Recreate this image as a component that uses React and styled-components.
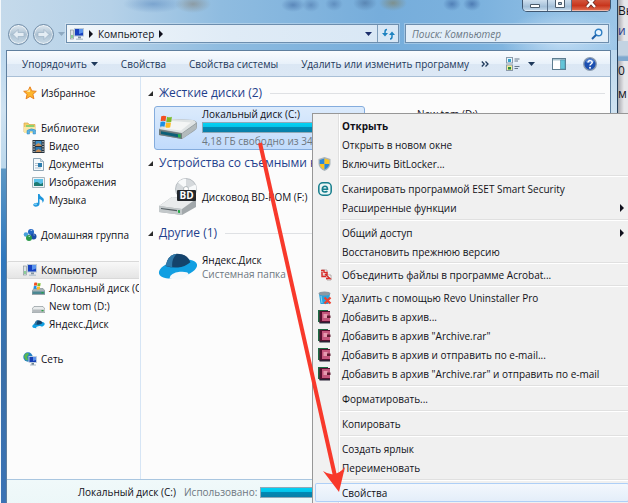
import React from 'react'
import styled, {createGlobalStyle, css} from 'styled-components'

const GlobalStyle = createGlobalStyle`
  * {
    box-sizing: border-box;
  }

  body {
    margin: 0;
    overflow: hidden;
    background: #f4f8fb;
    color: #101018;
    font: 10px/18px "Open Sans", "Noto Sans", sans-serif;
  }

  button, input {
    margin: 0;
    padding: 0;
    border: 0;
    background: none;
    color: inherit;
    font: inherit;
    text-align: left;
    white-space: nowrap;
  }

  a {
    color: inherit;
    text-decoration: none;
  }

  svg {
    display: block;
    flex: none;
  }
`

const Desktop = styled.div`
  position: relative;
  display: flex;
  height: 100vh;
  padding-left: 1px;
  overflow: hidden;
`

/* the window is taller than the screen, its last rows are cut off */
const Window = styled.div`
  flex: 1;
  min-width: 0;
  min-height: calc(100vh + 30px);
  display: flex;
  flex-direction: column;
  padding: 0 6px 0 5px;
  border-right: 1px solid #27415c;
  background:
    radial-gradient(ellipse 18px 9px at 192px 4px, rgba(125, 110, 90, .45), transparent),
    radial-gradient(ellipse 14px 8px at 392px 3px, rgba(130, 125, 90, .6), transparent),
    radial-gradient(ellipse 12px 8px at 364px 3px, rgba(60, 95, 140, .5), transparent),
    radial-gradient(ellipse 30px 9px at 152px 4px, rgba(70, 120, 180, .45), transparent),
    radial-gradient(ellipse 12px 7px at 292px 5px, rgba(50, 90, 150, .5), transparent),
    radial-gradient(ellipse 9px 7px at 310px 5px, rgba(60, 100, 155, .45), transparent),
    radial-gradient(ellipse 9px 7px at 333px 4px, rgba(60, 100, 155, .45), transparent),
    radial-gradient(ellipse 9px 7px at 451px 4px, rgba(40, 80, 145, .5), transparent),
    radial-gradient(ellipse 9px 7px at 471px 4px, rgba(40, 80, 145, .55), transparent),
    radial-gradient(ellipse 60px 30px at 560px 40px, rgba(225, 240, 255, .6), transparent),
    linear-gradient(90deg, #c5daeb 0, #b5d1e8 110px, #8fbce0 220px, #76addb 380px, #7cb2de 480px, #9cc6e8 100%) 0 0 / 100% 50px no-repeat,
    linear-gradient(#bcd8ee 50px, #cfe2f1 110px, #bcd8ec 168px, #5c97c4 169px, #2f77bd 260px, #3a6fa8 370px, #3b74b8 100%);
`

const TitleBar = styled.header`
  height: 22px;
  display: flex;
  justify-content: flex-end;
`

const Caption = styled.div`
  display: flex;
  height: 12px;
  border: 1px solid #3f5670;
  border-top: 0;
  border-radius: 0 0 5px 5px;
  overflow: hidden;
`

const CaptionButton = styled.button`
  width: ${({$close}) => ($close ? 39 : 24)}px;
  display: flex;
  justify-content: center;
  background: ${({$close}) => ($close
    ? 'linear-gradient(#d2573f, #c8351c 50%, #e2765a)'
    : 'linear-gradient(#cfe0ef, #a3bfd8 60%, #c7dcee)')};
  box-shadow: inset 0 -1px rgba(255, 255, 255, .5);

  & + & {
    border-left: 1px solid #5b738d;
  }
`

const NavBar = styled.nav`
  height: 28px;
  display: flex;
  align-items: flex-start;
  padding: 2px 2px 0;
`

const History = styled.div`
  display: flex;
  gap: 4px;
  align-items: center;
  height: 20px;
  margin-right: 1px;
`

const HistoryButton = styled.button`
  width: 21px;
  height: 21px;
  display: flex;
  align-items: center;
  justify-content: center;
  border: 1px solid #6f8ba6;
  border-radius: 50%;
  background: linear-gradient(#dde7ef, #adc2d3 50%, #c9dae7);
  box-shadow: inset 0 0 0 1px rgba(255, 255, 255, .6);
`

const fieldBox = css`
  display: flex;
  align-items: center;
  height: 19px;
  border: 1px solid #6d8eae;
  box-shadow: 0 0 0 1px rgba(255, 255, 255, .3);
`

const Address = styled.div`
  ${fieldBox}
  flex: 1;
  gap: 5px;
  padding-left: 3px;
  background: linear-gradient(90deg, #f1f6fa, #dfebf6 50%, #d8e7f5);
`

const Refresh = styled.button`
  width: 21px;
  height: 17px;
  display: flex;
  align-items: center;
  justify-content: center;
  border-left: 1px solid #7f9dba;
`

const Crumb = styled.button`
  flex: ${({$last}) => ($last ? 1 : 'none')};
`

const Search = styled.label`
  ${fieldBox}
  width: 204px;
  margin-left: 6px;
  padding: 0 5px 0 6px;
  background: #e3eef8;
`

const SearchInput = styled.input`
  flex: 1;
  min-width: 0;
  outline: 0;
  font-style: italic;

  &::placeholder {
    color: #6a7784;
    opacity: 1;
  }
`

const Client = styled.div`
  flex: 1;
  display: flex;
  flex-direction: column;
  border: 1px solid #5f7f9e;
  border-bottom: 0;
  background: #fcfcfc;
`

const Toolbar = styled.div`
  height: 26px;
  display: flex;
  align-items: center;
  padding: 0 13px 0 15px;
  border-bottom: 1px solid #a9bfd6;
  background: linear-gradient(#fafcfe, #e8f1fa 50%, #dbe7f4 52%, #dce8f5);
  color: #1e395b;
`

const Command = styled.button`
  display: flex;
  align-items: center;
  gap: 4px;
  margin-right: 23px;

  &:last-of-type {
    margin-right: 12px;
  }
`

const ToolIcons = styled.div`
  flex: 1;
  display: flex;
  align-items: center;
  justify-content: flex-end;
  gap: 17px;
`

const ViewButton = styled.button`
  display: flex;
  align-items: center;
  gap: 8px;
`

const Body = styled.div`
  flex: 1;
  display: flex;
`

const Sidebar = styled.aside`
  width: 134px;
  flex: none;
  display: flex;
  flex-direction: column;
  gap: 17px;
  padding: 7px 1px 0 0;
  border-right: 1px solid #d6e5f5;
`

const TreeItem = styled.a`
  display: flex;
  align-items: center;
  gap: 4px;
  height: 18px;
  padding-left: ${({$child}) => ($child ? 25 : 16)}px;
  overflow: hidden;
  white-space: nowrap;
  ${({$active}) => $active && css`
    border: 1px solid #d9d9d9;
    border-width: 1px 0;
    border-radius: 2px 0 0 2px;
    background: linear-gradient(#f8f8f8, #e5e5e5);
  `}
`

const Main = styled.main`
  flex: 1;
  min-width: 0;
  padding: 7px 5px 0 7px;
`

const GroupTitle = styled.h2`
  display: flex;
  align-items: center;
  gap: 6px;
  height: 18px;
  margin: 0;
  color: #1f3f8c;
  font-size: 12px;
  font-weight: 400;
  white-space: nowrap;

  &::after {
    content: '';
    flex: 1;
    height: 1px;
    margin-left: 2px;
    background: #dfe1e4;
  }
`

const Tiles = styled.div`
  display: grid;
  grid-template-columns: repeat(auto-fill, 211px);
  gap: 4px;
  padding: 4px 0 4px 6px;
`

const Tile = styled.button`
  display: flex;
  align-items: center;
  gap: 4px;
  height: 44px;
  padding: 0 7px 2px 3px;
  border: 1px solid ${({$active}) => ($active ? '#84acdd' : 'transparent')};
  border-radius: 3px;
  background: ${({$active}) => ($active ? 'linear-gradient(#dcebfc, #c1dbfc)' : 'none')};
`

const TileText = styled.span`
  flex: 1;
  display: flex;
  flex-direction: column;
  line-height: 14px;
`

const Muted = styled.span`
  color: #6d7780;
`

const Bar = styled.span`
  display: block;
  width: ${({$wide}) => ($wide ? '100%' : '90px')};
  height: 11px;
  margin: 1px 0;
  border: 1px solid #8fa9b8;
  background: #e6e6e6;

  span {
    display: block;
    height: 9px;
    background: linear-gradient(#00d3f5, #06c2e8 45%, #0089b4 50%, #0a7ea8);
  }
`

const Details = styled.footer`
  height: 54px;
  display: grid;
  grid-template-columns: 102px 72px 90px;
  align-content: start;
  align-items: center;
  column-gap: 4px;
  padding: 3px 0 0 71px;
  border-top: 1px solid #a9c6e0;
  background: linear-gradient(#f0f9fa, #e8f5f6);
  white-space: nowrap;
`

const Behind = styled.div`
  width: 10px;
  flex: none;
  overflow: hidden;
  padding-top: 1px;
  background: linear-gradient(90deg, #a8a8ae, #e6e7ea 6px);
  font-size: 12px;
  white-space: nowrap;
`

const BehindLine = styled.div`
  height: ${({$tall}) => ($tall ? 26 : 20)}px;
  line-height: ${({$tall}) => ($tall ? 26 : 20)}px;
  color: ${({$link}) => ($link ? '#2a3a8c' : '#15151c')};
  background: ${({$band}) => ($band ? 'linear-gradient(#c3d3e2 70%, #7fa9cf 80%)' : 'none')};
`

const Menu = styled.div`
  position: absolute;
  top: 113px;
  left: 312px;
  right: -4px;
  padding: 2px;
  border: 1px solid #979797;
  background: linear-gradient(90deg, #f1f1f1 25px, #e0e0e0 25px, #e0e0e0 26px, #fff 26px, #fff 27px, #f0f0f0 27px);
`

const MenuItem = styled.button`
  display: flex;
  align-items: center;
  width: 100%;
  height: 19px;
  padding: 0 5px 0 3px;
  border-radius: 2px;
  font-weight: ${({$bold}) => ($bold ? 700 : 400)};
  ${({$active}) => $active && css`
    background: linear-gradient(#f4f8fd, #e3edf9);
    box-shadow: inset 0 0 0 1px #aecff7;
  `}
`

const MenuIcon = styled.span`
  width: 24px;
  flex: none;
`

const MenuLabel = styled.span`
  flex: 1;
`

const Divider = styled.hr`
  height: 2px;
  margin: ${({$tight}) => ($tight ? 1 : 2)}px 0 ${({$tight}) => ($tight ? 1 : 2)}px 25px;
  border: 0;
  border-top: 1px solid #e0e0e0;
  background: #fff;
`

const Arrow = styled.svg`
  position: absolute;
  top: 140px;
  left: 255px;
`

/* icons */

const Caret = ({color = '#1e395b'}) => (
  <svg width="7" height="4" viewBox="0 0 7 4"><path d="M0 0h7L3.500 4z" fill={color}/></svg>
)

const Chevron = () => (
  <svg width="4" height="8" viewBox="0 0 4 8"><path d="M0 0l4 4-4 4z" fill="#10101c"/></svg>
)

const Twisty = () => (
  <svg width="5" height="5" viewBox="0 0 5 5"><path d="M5 0v5H0z" fill="#2b2b2b"/></svg>
)

const NavArrow = ({flip}) => (
  <svg width="13" height="11" viewBox="0 0 13 11">
    <path
      d="M6 .5L1 5.500l5 5V7.500h6v-4H6z"
      transform={flip ? 'rotate(180 6.500 5.500)' : undefined}
      fill="#e4edf4" stroke="#9db3c6" strokeWidth=".7"
    />
  </svg>
)

const ComputerIcon = () => (
  <svg width="14" height="14" viewBox="0 0 14 14">
    <rect x=".5" y="3" width="3" height="9" fill="#dfe4e6" stroke="#7e8b92" strokeWidth=".6"/>
    <path d="M1.500 8h1v3h-1z" fill="#39b54a"/>
    <rect x="4.500" y="1.500" width="9" height="7.500" fill="#1640c0" stroke="#b9c9d8"/>
    <path d="M9 2h4v3.500L9 7z" fill="#5a94ee"/>
    <path d="M8 9.500h3v2H8z" fill="#8394a5"/>
    <path d="M6 11.500h7V13H6z" fill="#bcc8d2"/>
  </svg>
)

const RefreshIcon = () => (
  <svg width="13" height="12" viewBox="0 0 13 12" fill="none" stroke="#1d82c0" strokeWidth="1.500">
    <path d="M5 1.500c-1.500 0-2 .8-2 2.500v2.500M8 11c1.500 0 2-.8 2-2.500V6"/>
    <path d="M0 5h6L3 8.500zM7 7h6l-3-3.500z" fill="#1d82c0" stroke="none"/>
  </svg>
)

const SearchIcon = () => (
  <svg width="12" height="12" viewBox="0 0 12 12" fill="none">
    <circle cx="7.500" cy="4.500" r="3.300" stroke="#2f7fc4" strokeWidth="1.400" fill="#e8f4ff"/>
    <path d="M5 7l-4 4" stroke="#1f5fa8" strokeWidth="2"/>
  </svg>
)

const ViewIcon = () => (
  <svg width="14" height="14" viewBox="0 0 14 14">
    <rect x=".5" y=".5" width="6" height="5.500" fill="#e8f5ff" stroke="#8b9aa8"/>
    <path d="M2 2h3v3H2z" fill="#33a3cc"/>
    <rect x=".5" y="8" width="6" height="5.500" fill="#f2ee9a" stroke="#8b9aa8"/>
    <path d="M2 10h3v2.500H2z" fill="#2a8a3e"/>
    <path d="M8.500 2h5M8.500 4h3.500M8.500 9.500h5M8.500 11.500h3.500" stroke="#66788a"/>
  </svg>
)

const PreviewIcon = () => (
  <svg width="14" height="12" viewBox="0 0 14 12">
    <rect x=".5" y=".5" width="13" height="11" fill="#fff" stroke="#5d7c8f"/>
    <path d="M1 1h12v1.500H1z" fill="#a8c3cf"/>
    <path d="M8.500 2h4.500v9H8.500z" fill="#62c4d8" stroke="#4e8fa6" strokeWidth=".6"/>
  </svg>
)

const HelpIcon = () => (
  <svg width="14" height="14" viewBox="0 0 14 14">
    <circle cx="7" cy="7" r="6.300" fill="#1c4fb0" stroke="#8d9db0" strokeWidth="1.300"/>
    <path d="M2.500 5a4.800 4.800 0 0 1 9 0Q7 7 2.500 5z" fill="#7aa5e6" opacity=".6"/>
    <path d="M5 5.500c0-2.600 4.200-2.400 4.200 0C9.200 7 7 7 7 8.600" fill="none" stroke="#fff" strokeWidth="1.500"/>
    <circle cx="7" cy="10.700" r="1" fill="#fff"/>
  </svg>
)

const StarIcon = () => (
  <svg width="14" height="14" viewBox="0 0 14 14">
    <path d="M7 .8l1.800 4.100 4.500.4-3.400 3 1 4.500L7 10.400l-3.900 2.400 1-4.500-3.400-3 4.500-.4z" fill="#fdb62c" stroke="#e9801e"/>
    <path d="M7 3v3L3.500 6z" fill="#ffe99a"/>
  </svg>
)

const LibraryIcon = () => (
  <svg width="14" height="14" viewBox="0 0 14 14">
    <path d="M1 2h4l1 1.500h6V11H1z" fill="#f5cf6d" stroke="#d9a648" strokeWidth=".7"/>
    <path d="M3 4h8v4H3z" fill="#8ed06f"/>
    <path d="M1 6h11v6H1z" fill="#fae7a4"/>
    <path d="M4 13V9.500Q8 6.500 12.500 9v4h-2.500v-3H6.500v3z" fill="#5cb4e5" stroke="#2b87c0" strokeWidth=".5"/>
  </svg>
)

const VideoIcon = () => (
  <svg width="13" height="13" viewBox="0 0 13 13">
    <path d="M.5 0h12v13H.5z" fill="#26323c"/>
    <path d="M3.500 1h6v5h-6z" fill="#3c8fc8"/>
    <path d="M3.500 7h6v5h-6z" fill="#2c76b0"/>
    <path d="M3.500 5l3-2 3 2v1h-6zM3.500 11l3-2 3 2v1h-6z" fill="#c58b55"/>
    <path d="M2 1v11M11 1v11" stroke="#d9e3ea" strokeWidth="1.200" strokeDasharray="1.300 1.200"/>
  </svg>
)

const DocumentIcon = () => (
  <svg width="13" height="13" viewBox="0 0 13 13">
    <path d="M1.500.5h7l3 3v9h-10z" fill="#f5f9fc" stroke="#8ea5b5"/>
    <path d="M8.500.5v3h3" fill="#c9dbe8" stroke="#8ea5b5" strokeWidth=".7"/>
    <path d="M3 5.500h4M3 7.500h3M3 10h6" stroke="#9fb2c0" strokeWidth=".8"/>
    <path d="M6 5h4v4H6z" fill="#2d7cae"/>
  </svg>
)

const PictureIcon = () => (
  <svg width="13" height="13" viewBox="0 0 13 13">
    <path d="M.5 1.500h12v10H.5z" fill="#eef3f5" stroke="#a7b4bc"/>
    <path d="M2 3h9v7H2z" fill="#5cc2ea"/>
    <path d="M2 7q3-2 5 0t4-.5V10H2z" fill="#1e7a72"/>
  </svg>
)

const MusicIcon = () => (
  <svg width="13" height="13" viewBox="0 0 13 13">
    <path d="M6 0h1.500Q8 2.500 11 4q2 2-.5 5Q11 6 7.500 5v5Q7 12.700 3.500 12.800 1 12.500 1.200 10.500 2 8.500 6 8.800z" fill="#1e96dc"/>
    <ellipse cx="3.600" cy="10.300" rx="1.600" ry="1" fill="#79ccf4"/>
  </svg>
)

const HomegroupIcon = () => (
  <svg width="14" height="14" viewBox="0 0 14 14">
    <circle cx="8" cy="4" r="3" fill="#2467c4"/>
    <circle cx="3" cy="6.500" r="2.300" fill="#4aa0dc"/>
    <circle cx="10.500" cy="8.500" r="3" fill="#1c4ea6"/>
    <circle cx="6" cy="10" r="3" fill="#2c9a4b"/>
    <path d="M7 2.500l1.500-.7 1 1zM5 8.800l1.500-.7.8 1zM10 7l1.200-.5.8 1z" fill="#e2f2ff"/>
  </svg>
)

const Flag = ({x = 0, y = 0, s = 1}) => (
  <g transform={`translate(${x} ${y}) scale(${s})`}>
    <path d="M1 1Q3 0 5 1L4.400 5Q2.500 4 .5 5z" fill="#f25022"/>
    <path d="M5.600 1.300Q7.500 2.200 9.500 1.300L9 5.300Q7 6.200 5 5.300z" fill="#7cbb2a"/>
    <path d="M.4 5.600Q2.300 4.700 4.200 5.600L3.600 9.400Q1.800 8.500 0 9.400z" fill="#1c8fe3"/>
    <path d="M4.900 5.900Q6.900 6.800 8.800 5.900L8.200 9.800Q6.300 10.600 4.300 9.800z" fill="#ffbb22"/>
  </g>
)

const DiskIcon = ({system}) => (
  <svg width="13" height="13" viewBox="0 0 13 13">
    <path d="M2 6.500h9l2 2.500v3.500H0V9z" fill={system ? '#a5b1b5' : '#e8ebec'} stroke="#7c878c" strokeWidth=".6"/>
    <path d="M.5 9.500h12v2.500H.5z" fill={system ? '#4b8792' : '#b5babd'}/>
    <path d="M9.500 10h2v1.300h-2z" fill="#27a243"/>
    {system && <Flag x={1.500} s={0.750}/>}
  </svg>
)

const YandexIcon = ({width = 13, height = 13}) => (
  <svg width={width} height={height} viewBox="0 0 42 30">
    <ellipse cx="21" cy="17" rx="20.500" ry="9" transform="rotate(-14 21 17)" fill="#119fe2"/>
    <path d="M8 14Q10 2 20 1q11 0 14 9-6 5-13 5.500T8 14z" fill="#14436c"/>
    <path d="M8 14Q10 2 20 1q-6 5-5 14.300z" fill="#2f78a8"/>
    <path d="M12 27q1-6 11-7 8-.5 9 2-2 6-12 6.500z" fill="#f4f8fb"/>
  </svg>
)

const NetworkIcon = () => (
  <svg width="14" height="14" viewBox="0 0 14 14">
    <circle cx="5" cy="5" r="4.700" fill="#2680c4"/>
    <path d="M2 2q3-2 4 0L4 5l1 3-2 .5L1 5z" fill="#59b851"/>
    <rect x="6" y="4.500" width="7.500" height="6" fill="#163fb6" stroke="#c3d2df" strokeWidth=".9"/>
    <path d="M10 5h3v3l-3 1z" fill="#5c91e8"/>
    <path d="M8.500 11h2.500v2H8.500z" fill="#6d8193"/>
    <path d="M7 12.500h6v1H7z" fill="#aab8c4"/>
  </svg>
)

const BigDiskIcon = () => (
  <svg width="40" height="26" viewBox="0 0 40 26">
    <path d="M1 15L13 5l22 1q4 1 4 4v3q0 2-3 4l-12 8-23-4z" fill="#8d9598"/>
    <path d="M1 15L13 5l22 1q3 1 3 3L24 19z" fill="#dfe3e4"/>
    <path d="M6 14.500L14 7l19 1.500-10 8z" fill="#f4f5f5"/>
    <path d="M1 15.500l23 4V25L1 21z" fill="#6d7b7d"/>
    <path d="M3 17.200l17 3v3L3 20z" fill="#0b5f78"/>
    <path d="M20 20l2.500.4v3.400L20 23z" fill="#22b14c"/>
    <path d="M24 19.500L38.500 9.500v5L24 25z" fill="#b3babc"/>
    <Flag x={2} y={1} s={1.250}/>
  </svg>
)

const BdRomIcon = () => (
  <svg width="40" height="38" viewBox="0 0 40 38">
    <circle cx="28" cy="11" r="10.500" fill="#d5d9dc" stroke="#a4abb0" strokeWidth=".7"/>
    <path d="M28 11L20 4.500A10.500 10.500 0 0 1 28 .8zM28 11l9.500-4.500A10.500 10.500 0 0 1 38 14z" fill="#f7f9fa"/>
    <circle cx="28" cy="11" r="2.500" fill="#fff" stroke="#9aa3a9" strokeWidth=".7"/>
    <path d="M1 28l13-9 24 2v8l-14 8-23-3z" fill="#a2a8ab"/>
    <path d="M1 28l13-9 24 2-14 10z" fill="#e9ebec"/>
    <path d="M1 28l23 3v6L1 34z" fill="#c3c8ca"/>
    <path d="M3 30.500l16 2.200" stroke="#555e62" strokeWidth="1.200"/>
    <path d="M20 32l2 .3V35l-2-.3z" fill="#22a845"/>
    <rect x="19" y="12" width="19" height="11" rx="1" fill="#23272b"/>
    <text x="28.500" y="21" fill="#fff" fontSize="10" fontWeight="700" textAnchor="middle">BD</text>
  </svg>
)

const ShieldIcon = () => (
  <svg width="13" height="14" viewBox="0 0 13 14">
    <path d="M6.500 0L12.500 2v5q-.5 4.500-6 7-5.500-2.500-6-7V2z" fill="#aab4ba"/>
    <path d="M6.500 1.500V7H1.700V3z" fill="#2a87d8"/>
    <path d="M6.500 1.500V7h4.800V3z" fill="#fbc31f"/>
    <path d="M6.500 12.500V7H1.700q.6 3.500 4.800 5.500z" fill="#fbc31f"/>
    <path d="M6.500 12.500V7h4.800q-.6 3.500-4.800 5.500z" fill="#2a87d8"/>
  </svg>
)

const EsetIcon = () => (
  <svg width="14" height="14" viewBox="0 0 14 14">
    <rect x=".8" y=".8" width="12.400" height="12.400" rx="4" fill="#eaf6f6" stroke="#147d8c" strokeWidth="1.500"/>
    <path d="M4.300 7.200h5.200Q9.500 4.200 7 4.200T4.300 7.200t2.900 2.700q1.400 0 2.200-.8" fill="none" stroke="#147d8c" strokeWidth="1.600"/>
  </svg>
)

const AcrobatIcon = () => (
  <svg width="14" height="12" viewBox="0 0 14 12">
    <path d="M4 1h5v5H4zM9 6h4v5H9z" fill="#fff" stroke="#9a8c8c" strokeWidth=".7"/>
    <path d="M3 1.500h3v2h3V6M4 3v4.500h4M7 5l5 4.500H8" fill="none" stroke="#d92c28" strokeWidth="1.400"/>
  </svg>
)

const RevoIcon = () => (
  <svg width="14" height="14" viewBox="0 0 14 14">
    <path d="M1 3h11l-1.500 10h-8z" fill="#2aa3dd"/>
    <ellipse cx="6.500" cy="2.500" rx="6" ry="2" fill="#8b99a3"/>
    <path d="M3 5l1 7" stroke="#8bd3f5"/>
    <path d="M6.500 6.500l6 6m0-6l-6 6" stroke="#ee4130" strokeWidth="2.200"/>
  </svg>
)

const RarIcon = () => (
  <svg width="14" height="15" viewBox="0 0 14 15">
    <path d="M0 1h10v12H0z" fill="#1d6b43"/>
    <path d="M1.500 2H12v12H1.500z" fill="#571030"/>
    <path d="M4 3h8v9H4z" fill="#c4567c"/>
    <path d="M5.500 5h4v4h-4z" fill="#e79ab0"/>
    <path d="M9 6.500h3.500v2.500H9z" fill="#5d1a30"/>
    <path d="M1.500 13H12v1.500H1.500z" fill="#2b2336"/>
  </svg>
)

const tree = [
  [{text: 'Избранное', icon: <StarIcon/>}],
  [
    {text: 'Библиотеки', icon: <LibraryIcon/>},
    {text: 'Видео', icon: <VideoIcon/>, child: true},
    {text: 'Документы', icon: <DocumentIcon/>, child: true},
    {text: 'Изображения', icon: <PictureIcon/>, child: true},
    {text: 'Музыка', icon: <MusicIcon/>, child: true},
  ],
  [{text: 'Домашняя группа', icon: <HomegroupIcon/>}],
  [
    {text: 'Компьютер', icon: <ComputerIcon/>, active: true},
    {text: 'Локальный диск (C:)', icon: <DiskIcon system/>, child: true},
    {text: 'New tom (D:)', icon: <DiskIcon/>, child: true},
    {text: 'Яндекс.Диск', icon: <YandexIcon/>, child: true},
  ],
  [{text: 'Сеть', icon: <NetworkIcon/>}],
]

const menu = [
  {text: 'Открыть', bold: true},
  {text: 'Открыть в новом окне'},
  {text: 'Включить BitLocker...', icon: <ShieldIcon/>},
  {divider: true},
  {text: 'Сканировать программой ESET Smart Security', icon: <EsetIcon/>},
  {text: 'Расширенные функции', more: true},
  {divider: true},
  {text: 'Общий доступ', more: true},
  {text: 'Восстановить прежнюю версию'},
  {divider: true, tight: true},
  {text: 'Объединить файлы в программе Acrobat...', icon: <AcrobatIcon/>},
  {divider: true, tight: true},
  {text: 'Удалить с помощью Revo Uninstaller Pro', icon: <RevoIcon/>},
  {text: 'Добавить в архив...', icon: <RarIcon/>},
  {text: 'Добавить в архив "Archive.rar"', icon: <RarIcon/>},
  {text: 'Добавить в архив и отправить по e-mail...', icon: <RarIcon/>},
  {text: 'Добавить в архив "Archive.rar" и отправить по e-mail', icon: <RarIcon/>},
  {divider: true},
  {text: 'Форматировать...'},
  {divider: true},
  {text: 'Копировать'},
  {divider: true},
  {text: 'Создать ярлык'},
  {text: 'Переименовать'},
  {divider: true},
  {text: 'Свойства', active: true},
]

const UsageBar = ({used, wide}) => (
  <Bar $wide={wide}><span style={{width: `${used}%`}}/></Bar>
)

const Group = ({title, children}) => (
  <section>
    <GroupTitle><Twisty/>{title}</GroupTitle>
    <Tiles>{children}</Tiles>
  </section>
)

const ContextMenu = () => (
  <Menu role="menu">
    {menu.map((item, i) => item.divider
      ? <Divider key={i} $tight={item.tight}/>
      : (
        <MenuItem key={i} role="menuitem" $bold={item.bold} $active={item.active}>
          <MenuIcon>{item.icon}</MenuIcon>
          <MenuLabel>{item.text}</MenuLabel>
          {item.more && <Chevron/>}
        </MenuItem>
      ))}
  </Menu>
)

const App = () => (
  <>
    <GlobalStyle/>
    <Desktop>
      <Window>
        <TitleBar>
          <Caption>
            <CaptionButton aria-label="Свернуть">
              <svg width="12" height="10"><path d="M1.500 4.500h9v3h-9z" fill="#fff" stroke="#4b5b6b"/></svg>
            </CaptionButton>
            <CaptionButton aria-label="Развернуть">
              <svg width="12" height="10">
                <path d="M1.500-2h9v9.500h-9z" fill="#fff" stroke="#4b5b6b"/>
                <path d="M4.500 2.500h3v2h-3z" fill="#a9c0d6" stroke="#4b5b6b"/>
              </svg>
            </CaptionButton>
            <CaptionButton $close aria-label="Закрыть">
              <svg width="12" height="10">
                <path d="M2-2l8 9M10-2L2 7" stroke="#6b2a22" strokeWidth="4"/>
                <path d="M2-2l8 9M10-2L2 7" stroke="#fff" strokeWidth="2.400"/>
              </svg>
            </CaptionButton>
          </Caption>
        </TitleBar>

        <NavBar>
          <History>
            <HistoryButton aria-label="Назад"><NavArrow/></HistoryButton>
            <HistoryButton aria-label="Вперед"><NavArrow flip/></HistoryButton>
            <Caret color="#8ea9c1"/>
          </History>
          <Address>
            <ComputerIcon/>
            <Chevron/>
            <Crumb>Компьютер</Crumb>
            <Crumb $last aria-label="Папки"><Chevron/></Crumb>
            <Caret color="#1b2e6b"/>
            <Refresh aria-label="Обновить"><RefreshIcon/></Refresh>
          </Address>
          <Search>
            <SearchInput placeholder="Поиск: Компьютер" aria-label="Поиск: Компьютер"/>
            <SearchIcon/>
          </Search>
        </NavBar>

        <Client>
          <Toolbar>
            <Command>Упорядочить <Caret/></Command>
            <Command>Свойства</Command>
            <Command>Свойства системы</Command>
            <Command>Удалить или изменить программу</Command>
            <ToolIcons>
              <svg width="8" height="6" viewBox="0 0 8 6" fill="none" stroke="#1e395b" strokeWidth="1.300">
                <path d="M.8.500L3.200 3 .8 5.500M4.500.5L7 3 4.500 5.500"/>
              </svg>
              <ViewButton aria-label="Изменить представление"><ViewIcon/><Caret/></ViewButton>
              <PreviewIcon/>
              <HelpIcon/>
            </ToolIcons>
          </Toolbar>

          <Body>
            <Sidebar>
              {tree.map((items, i) => (
                <div key={i}>
                  {items.map(({text, icon, child, active}) => (
                    <TreeItem key={text} href="#" $child={child} $active={active}>
                      {icon}<span>{text}</span>
                    </TreeItem>
                  ))}
                </div>
              ))}
            </Sidebar>

            <Main>
              <Group title="Жесткие диски (2)">
                <Tile $active>
                  <BigDiskIcon/>
                  <TileText>
                    Локальный диск (C:)
                    <UsageBar used={88} wide/>
                    <Muted>4,18 ГБ свободно из 34,3 ГБ</Muted>
                  </TileText>
                </Tile>
                <Tile>
                  <BigDiskIcon/>
                  <TileText>
                    New tom (D:)
                    <UsageBar used={60} wide/>
                    <Muted>80,2 ГБ свободно из 198 ГБ</Muted>
                  </TileText>
                </Tile>
              </Group>
              <Group title="Устройства со съемными носителями (1)">
                <Tile>
                  <BdRomIcon/>
                  <TileText>Дисковод BD-ROM (F:)</TileText>
                </Tile>
              </Group>
              <Group title="Другие (1)">
                <Tile>
                  <YandexIcon width={40} height={30}/>
                  <TileText>
                    Яндекс.Диск
                    <Muted>Системная папка</Muted>
                  </TileText>
                </Tile>
              </Group>
            </Main>
          </Body>

          <Details>
            <span>Локальный диск (C:)</span>
            <Muted>Использовано:</Muted>
            <UsageBar used={88}/>
            <Muted>Локальный диск</Muted>
            <Muted>Свободно:</Muted>
            <span>4,18 ГБ</span>
          </Details>
        </Client>
      </Window>

      <Behind aria-hidden="true">
        <BehindLine>Вы</BehindLine>
        <BehindLine $link>и</BehindLine>
        <BehindLine $band/>
        <BehindLine>0</BehindLine>
        <BehindLine $tall>м</BehindLine>
      </Behind>

      <ContextMenu/>

      <Arrow width="100" height="360" viewBox="0 0 100 360">
        <path d="M5 3l75 333" stroke="#f8392b" strokeWidth="4"/>
        <path d="M84 352L68 331q6 4 11 3 6-1 11-7z" fill="#f8392b"/>
      </Arrow>
    </Desktop>
  </>
)

export default App
